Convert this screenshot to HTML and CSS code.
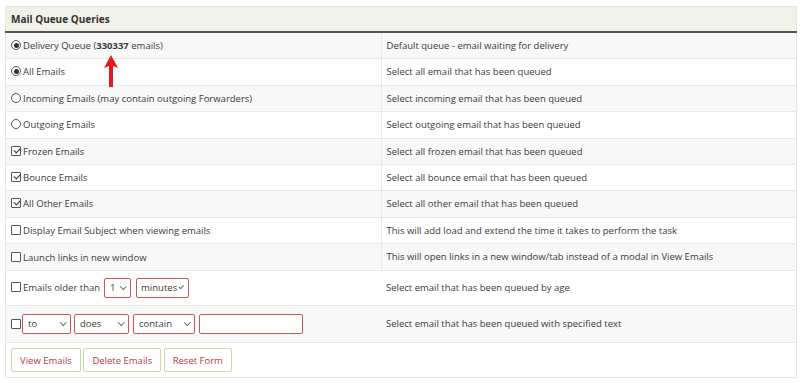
FILE: index.html
```html
<!DOCTYPE html>
<html lang="en">
<head>
    <meta charset="UTF-8">
    <title>Mail Queue Queries</title>
    <link rel="stylesheet" href="styles.css">
</head>
<body>
<main>
<table class="queue">
    <thead>
        <tr><th colspan="2">Mail Queue Queries</th></tr>
    </thead>
    <tbody>
        <tr>
            <td class="col_opt"><label><input type="radio" name="q" checked>Delivery Queue (<b>330337</b> emails)</label>
                <svg class="arrow" width="16" height="34" viewBox="0 0 16 34"><path d="M8 0 L15 13 L10 11 L10 32 L6 32 L6 11 L1 13 Z" fill="#e8191b"/></svg>
            </td>
            <td>Default queue - email waiting for delivery</td>
        </tr>
        <tr>
            <td><label><input type="radio" name="q2" checked>All Emails</label></td>
            <td>Select all email that has been queued</td>
        </tr>
        <tr>
            <td><label><input type="radio" name="q3">Incoming Emails (may contain outgoing Forwarders)</label></td>
            <td>Select incoming email that has been queued</td>
        </tr>
        <tr>
            <td><label><input type="radio" name="q4">Outgoing Emails</label></td>
            <td>Select outgoing email that has been queued</td>
        </tr>
        <tr>
            <td><label><input type="checkbox" checked>Frozen Emails</label></td>
            <td>Select all frozen email that has been queued</td>
        </tr>
        <tr>
            <td><label><input type="checkbox" checked>Bounce Emails</label></td>
            <td>Select all bounce email that has been queued</td>
        </tr>
        <tr>
            <td><label><input type="checkbox" checked>All Other Emails</label></td>
            <td>Select all other email that has been queued</td>
        </tr>
        <tr>
            <td><label><input type="checkbox">Display Email Subject when viewing emails</label></td>
            <td>This will add load and extend the time it takes to perform the task</td>
        </tr>
        <tr>
            <td><label><input type="checkbox">Launch links in new window</label></td>
            <td>This will open links in a new window/tab instead of a modal in View Emails</td>
        </tr>
        <tr class="row_form">
            <td><label><input type="checkbox">Emails older than</label>
                <span class="sel sel_num">1</span><span class="sel sel_unit">minutes</span></td>
            <td>Select email that has been queued by age</td>
        </tr>
        <tr class="row_form row_text">
            <td><input type="checkbox">
                <span class="sel sel_to">to</span><span class="sel sel_does">does</span><span class="sel sel_cont">contain</span><input class="txt" type="text"></td>
            <td>Select email that has been queued with specified text</td>
        </tr>
        <tr class="row_btn">
            <td colspan="2">
                <button class="btn" type="button">View Emails</button>
                <button class="btn" type="button">Delete Emails</button>
                <button class="btn" type="button">Reset Form</button>
            </td>
        </tr>
    </tbody>
</table>
</main>
</body>
</html>
```

FILE: styles.css
```css
*{
    font-family: "Open Sans", Arial, sans-serif;
    box-sizing: border-box;
}
body{
    margin: 0;
    background: #fff;
}
main{
    padding: 6px 4px 0 5px;
}
.queue{
    width: 792px;
    border-collapse: collapse;
    font-size: 9.5px;
    color: #3a3a3a;
    border: 1px solid #e6e6e6;
}
.queue th{
    text-align: left;
    background: #f2f1e8;
    color: #333;
    font-size: 10px;
    font-weight: bold;
    padding: 4px 5px 4px;
    line-height: 16px;
    border-bottom: 2px solid #555;
}
.queue td{
    padding: 5px 5px;
    line-height: 15.4px;
    border-top: 1px solid #e8e8e8;
    vertical-align: middle;
    white-space: nowrap;
}
.queue td:first-child{
    width: 374px;
    border-right: 1px solid #e8e8e8;
}
.queue tbody tr:nth-child(odd){
    background: #f8f8f8;
}
.col_opt{
    position: relative;
}
.arrow{
    position: absolute;
    left: 97px;
    top: 22px;
}
input[type=radio], input[type=checkbox]{
    appearance: none;
    margin: 0 2px 0 0;
    width: 10px;
    height: 10px;
    border: 1px solid #555;
    vertical-align: -1px;
    background: #fff;
    position: relative;
}
input[type=radio]{
    border-radius: 50%;
}
input[type=radio]:checked::after{
    content: "";
    position: absolute;
    left: 1.5px;
    top: 1.5px;
    width: 5px;
    height: 5px;
    border-radius: 50%;
    background: #333;
}
input[type=checkbox]{
    border-radius: 1px;
}
input[type=checkbox]:checked::after{
    content: "";
    position: absolute;
    left: 2.5px;
    top: 0px;
    width: 3px;
    height: 5px;
    border: solid #333;
    border-width: 0 1.2px 1.2px 0;
    transform: rotate(45deg);
}
.row_form td{
    padding-top: 7px;
    padding-bottom: 7px;
}
.row_text td{
    padding-top: 8px;
    padding-bottom: 8px;
}
.row_form td:first-child{
    display: flex;
    align-items: center;
    width: 375px;
    border-right: none;
}
.row_form td:first-child > input[type=checkbox]{
    margin-right: 0;
}
.sel{
    display: inline-flex;
    align-items: center;
    justify-content: space-between;
    height: 20px;
    padding: 0 4px 0 5px;
    border: 1px solid #c9575b;
    border-radius: 2px;
    background: #fff;
}
.sel::after{
    content: "";
    width: 3.5px;
    height: 3.5px;
    border: solid #666;
    border-width: 0 1px 1px 0;
    transform: rotate(45deg);
    margin: -3px 1px 0 3px;
}
.sel_num{ width: 27px; margin-left: 4px; }
.sel_unit{ width: 53px; margin-left: 5px; padding-left: 4px; }
.sel_to{ width: 49px; margin-left: 1px; }
.sel_does{ width: 55px; margin-left: 3px; }
.sel_cont{ width: 62px; margin-left: 4px; }
.txt{
    width: 104px;
    height: 20px;
    margin-left: 4px;
    border: 1px solid #c9575b;
    border-radius: 2px;
}
.row_btn td{
    padding: 5px 5px 5px;
    background: #fff;
}
.btn{
    font-size: 9.5px;
    height: 24px;
    padding: 0 8px;
    margin-right: 0;
    color: #b0413e;
    background: #fff;
    border: 1px solid #c8dba5;
    border-radius: 2px;
}
```
